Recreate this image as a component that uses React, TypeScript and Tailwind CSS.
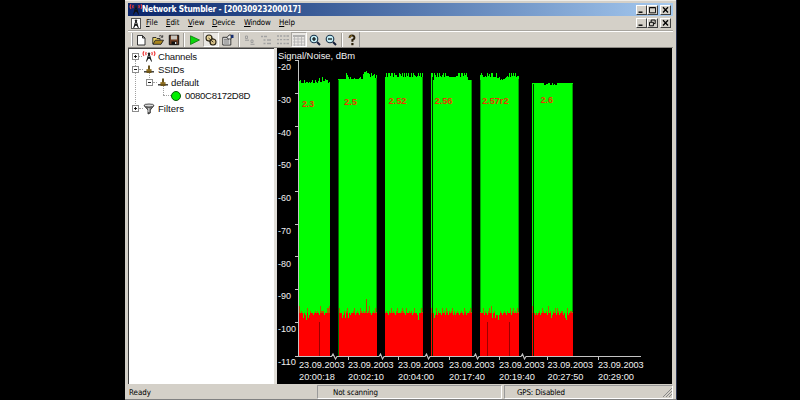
import React from "react";

const ui = "font-['DejaVu_Sans_Condensed','DejaVu_Sans',sans-serif]";
const arial = "font-['Liberation_Sans',Arial,sans-serif]";

type Item = { t: string; w: string; ls: string };

const menus: Item[] = [
  { t: "File", w: "w-[20px]", ls: "tracking-[0.05px]" },
  { t: "Edit", w: "w-[22px]", ls: "tracking-[-0.1px]" },
  { t: "View", w: "w-[24px]", ls: "tracking-[-0.1px]" },
  { t: "Device", w: "w-[32px]", ls: "tracking-[-0.25px]" },
  { t: "Window", w: "w-[35px]", ls: "tracking-[-0.25px]" },
  { t: "Help", w: "w-[20px]", ls: "tracking-[-0.05px]" },
];

function Tower({ red = true }: { red?: boolean }) {
  return (
    <svg viewBox="0 0 14 11" className="block h-[11px] w-[14px] shrink-0">
      <path d="M7 2.5 L4.5 10.5 M7 2.5 L9.5 10.5 M5.8 6 L9 8.5 M8.2 6 L5 8.5" fill="none" stroke="#111" strokeWidth="1" />
      <circle cx="7" cy="2.6" r="1.2" fill="#222" />
      {red && (
        <path d="M4.3 1 Q3.2 2.6 4.3 4.2 M2 .3 Q.2 2.6 2 4.8 M9.7 1 Q10.8 2.6 9.7 4.2 M12 .3 Q13.8 2.6 12 4.8" fill="none" stroke="#ef3b3b" strokeWidth="1.2" />
      )}
    </svg>
  );
}

function WinButton({ kind }: { kind: "min" | "max" | "restore" | "close" }) {
  return (
    <div className="h-[10px] w-[11px] border border-t-white border-l-white border-r-[#404040] border-b-[#404040] bg-[#d4d0c8]">
      <svg viewBox="0 0 9 8" className="block h-[8px] w-[9px]">
        {kind === "min" && <path d="M1.5 6.2 H5.5" stroke="#000" strokeWidth="1.4" />}
        {kind === "max" && <path d="M1.5 1.5 H7.5 V6.8 H1.5 Z M1.5 1.8 H7.5" fill="none" stroke="#000" strokeWidth=".9" />}
        {kind === "restore" && <path d="M3.2 3 V1 H7.2 V4.6 H5.6 M1.5 3.3 H5.4 V6.8 H1.5 Z" fill="none" stroke="#000" strokeWidth=".95" />}
        {kind === "close" && <path d="M2 1.3 L7 6.5 M7 1.3 L2 6.5" stroke="#000" strokeWidth="1.3" />}
      </svg>
    </div>
  );
}

function Separator() {
  return <div className="mx-[2px] h-[14px] w-[2px] border-l border-[#a19e98] border-r border-r-white" />;
}

function Tool({ w, pressed, children }: { w: string; pressed?: boolean; children: React.ReactNode }) {
  return (
    <div className={`flex h-[15px] items-center justify-center ${w} ${pressed ? "border border-t-[#a8a59f] border-l-[#a8a59f] border-r-white border-b-white bg-[#e9e7e3]" : ""}`}>
      <svg viewBox="0 0 12 12" className="block h-[12px] w-[12px] shrink-0">{children}</svg>
    </div>
  );
}

function Magnifier({ plus }: { plus?: boolean }) {
  return (
    <>
      <circle cx="5" cy="5" r="3.8" fill="#c4eef5" stroke="#16324a" strokeWidth="1.1" />
      <path d={plus ? "M3 5 H7 M5 3 V7" : "M3 5 H7"} stroke="#000" strokeWidth="1.2" />
      <path d="M8 8 L11 11" stroke="#16213a" strokeWidth="1.9" />
    </>
  );
}

function Expander({ plus }: { plus?: boolean }) {
  return (
    <svg viewBox="0 0 7 7" className="block h-[7px] w-[7px] shrink-0">
      <rect x=".5" y=".5" width="6" height="6" fill="#fff" stroke="#8c8c8c" />
      <path d={plus ? "M2 3.5 H5 M3.5 2 V5" : "M2 3.5 H5"} stroke="#000" strokeWidth=".9" />
    </svg>
  );
}

function Dots({ w }: { w: string }) {
  return <div className={`h-px shrink-0 border-t border-dotted border-[#a0a0a0] ${w}`} />;
}

function Station() {
  return (
    <svg viewBox="0 0 12 9" className="block h-[9px] w-[12px] shrink-0">
      <path d="M1 6.8 H11" stroke="#333" strokeWidth="1.4" />
      <path d="M3.5 4.2 H8.5 V8 H3.5 Z" fill="#6d5518" />
      <path d="M6 .6 V5" stroke="#5b440c" strokeWidth="1.8" />
      <path d="M3.5 5 H8" stroke="#c79a32" strokeWidth=".8" />
    </svg>
  );
}

function Tree() {
  return (
    <div className={`relative w-[146px] shrink-0 border-l border-t border-[#404040] bg-white pt-[1px] pl-[3px] text-[9.6px] leading-[13px] tracking-[-0.22px] text-[#111] ${arial}`}>
      <div className="absolute top-[11px] left-[6px] h-[46px] border-l border-dotted border-[#a0a0a0]" />
      <div className="absolute top-[24px] left-[20px] h-[5px] border-l border-dotted border-[#a0a0a0]" />
      <div className="absolute top-[37px] left-[34px] h-[9px] border-l border-dotted border-[#a0a0a0]" />
      <div className="relative flex h-[13px] items-center">
        <Expander plus /><Dots w="w-[3px]" /><Tower /><span className="ml-[2px]">Channels</span>
      </div>
      <div className="relative flex h-[13px] items-center">
        <Expander /><Dots w="w-[4px]" /><Station /><span className="ml-[3px]">SSIDs</span>
      </div>
      <div className="relative flex h-[13px] items-center pl-[14px]">
        <Expander /><Dots w="w-[4px]" /><Station /><span className="ml-[2px] tracking-[-0.15px]">default</span>
      </div>
      <div className="relative flex h-[13px] items-center pl-[31px]">
        <Dots w="w-[8px]" />
        <div className="size-[10px] shrink-0 rounded-full border border-[#0a5a0a] bg-[#00f000]" />
        <span className="ml-[4px] tracking-[-0.31px]">0080C8172D8D</span>
      </div>
      <div className="relative flex h-[13px] items-center">
        <Expander plus /><Dots w="w-[4px]" />
        <svg viewBox="0 0 12 12" className="block h-[12px] w-[12px] shrink-0">
          <path d="M1 2.5 L5 7 V11 L7.3 10 V7 L11 2.5 Z" fill="#777" stroke="#222" strokeWidth=".8" />
          <ellipse cx="6" cy="2.5" rx="5" ry="1.5" fill="#ddd" stroke="#222" strokeWidth=".8" />
          <path d="M5.8 5 V9" stroke="#fff" strokeWidth=".8" />
        </svg>
        <span className="ml-[3px] tracking-[0px]">Filters</span>
      </div>
    </div>
  );
}

// Bars in screen pixels: signal tops are one digit per pixel column, offset from `top`.
type Bar = { x: number; top: number; tops: string; noise: string; label: string; lx: number; ly: number; lw: number };

const bars: Bar[] = [
  { x: 299, top: 77, tops: "4366636556565366356415504423365", noise: "2545756837645565454562444655332", label: "2.3", lx: 302, ly: 106.5, lw: 12 },
  { x: 338, top: 70, tops: "999999993579799989999879942213347365485", noise: "335576474375655436545634545415425654534", label: "2.5", lx: 344, ly: 105, lw: 13 },
  { x: 385, top: 71, tops: "62622522624466235262625266262456525262", noise: "54564535456435554345635545465355685533", label: "2.52", lx: 388.5, ly: 104.2, lw: 18 },
  { x: 431, top: 71, tops: "22924626256426255566666665522622524269999", noise: "33576364556354634645436465456545634655434", label: "2.56", lx: 434.5, ly: 104.2, lw: 18 },
  { x: 480, top: 71, tops: "424665625362266627769898876562625252655", noise: "455364564352754766864565456455364354534", label: "2.57r2", lx: 482, ly: 103.8, lw: 26.5 },
  { x: 532, top: 78, tops: "55555555555577665577576775555555555555555", noise: "23565654653455462547645363465446578365444", label: "2.6", lx: 540.5, ly: 103, lw: 12.5 },
];

const dates = [
  { x: 299, t: "20:00:18" },
  { x: 348, t: "20:02:10" },
  { x: 398, t: "20:04:00" },
  { x: 449, t: "20:17:40" },
  { x: 499, t: "20:19:40" },
  { x: 547.5, t: "20:27:50" },
  { x: 598, t: "20:29:00" },
];

function steps(x: number, tops: number[]) {
  return tops.map((y, i) => `M${x + i} ${y}h1V356h-1z`).join("");
}

function Chart() {
  return (
    <svg viewBox="277 48 395 336" shapeRendering="crispEdges" className={`block h-[336px] w-[395px] shrink-0 bg-black ${arial}`}>
      {bars.map((b) => {
        const noise = b.noise.split("").map((c) => 301 + Number(c) * 2.4);
        return (
          <g key={b.label}>
            <path d={steps(b.x, b.tops.split("").map((c) => b.top + Number(c)))} fill="#00ff00" />
            <path d={steps(b.x, noise)} fill="#ff0000" />
            <path d={noise.map((y, i) => (y < 312 ? `M${b.x + i} ${y}h1V313h-1z` : "")).join("")} fill="#b06000" />
            <text x={b.lx} y={b.ly} textLength={b.lw} lengthAdjust="spacingAndGlyphs" fontSize="9.8" fontWeight="700" fill="#e83800">{b.label}</text>
          </g>
        );
      })}
      <path d="M338.5 80V356" stroke="#007000" />
      <path d="M432.5 77V356 M533.5 84V356" stroke="#003000" />
      <path d="M376.5 78V312 M422.5 77V312 M471.5 80V312 M518.5 79V312 M572.5 84V312 M480.5 80V312" stroke="#00a000" />
      <path d="M366.5 299V312" stroke="#c04000" />
      <path d="M319.5 322V356 M487.5 322V356 M509.5 322V356" stroke="#9c0000" />
      <path d="M298.5 61V356" stroke="#c4c4c4" />
      {[60.5, 93.5, 126.5, 159.5, 191.5, 224.5, 256.5, 289.5, 322.5].map((y) => (
        <path key={y} d={`M295 ${y}H299`} stroke="#c4c4c4" />
      ))}
      <path
        d="M295 356.5H331.5L333 354L335.5 359L337 356.5H379L380.5 354L382.5 359L384 356.5H425L426.5 354L428.5 359L430 356.5H474L475.5 354L477.5 359L479 356.5H521L522.5 354L524.5 359L526 356.5H641"
        fill="none" stroke="#c4c4c4" strokeWidth="1.1" shapeRendering="auto"
      />
      {dates.map((d, i) => (
        <g key={d.t} fontSize="9.6" fill="#f0f0f0">
          {i > 0 && <path d={`M${Math.floor(d.x) + 0.5} 357v3`} stroke="#c4c4c4" />}
          <text x={d.x} y="368.4" textLength="45.7" lengthAdjust="spacingAndGlyphs">23.09.2003</text>
          <text x={d.x} y="380.2" textLength="36" lengthAdjust="spacingAndGlyphs">{d.t}</text>
        </g>
      ))}
      <text x="278" y="58.7" fontSize="9.6" fill="#f4f4f4" textLength="77" lengthAdjust="spacingAndGlyphs">Signal/Noise, dBm</text>
      {[20, 30, 40, 50, 60, 70, 80, 90, 100, 110].map((v, i) => (
        <text key={v} x="278" y={70.3 + i * 32.7} fontSize="9.6" fill="#f0f0f0" textLength={v > 99 ? 18 : 13} lengthAdjust="spacingAndGlyphs">{`-${v}`}</text>
      ))}
    </svg>
  );
}

export default function App() {
  return (
    <div className="flex h-[400px] w-[800px] overflow-hidden bg-black pl-[125px]">
      <div className={`flex h-[400px] w-[552px] flex-col border-b border-b-[#808080] border-r border-r-[#2a3350] bg-[#d4d0c8] pr-[3px] pl-[3px] ${ui}`}>
        <div className="-mx-[3px] mb-[2px] h-px shrink-0 bg-[#eeece8]" />
        <div className="flex h-[13px] shrink-0 items-center bg-linear-to-r from-[#0a246a] to-[#a6caf0] pr-[2px] pl-px">
          <Tower />
          <span className="ml-[-1px] flex-1 text-[8.3px] leading-[13px] font-bold tracking-[-0.17px] whitespace-nowrap text-white">Network Stumbler - [20030923200017]</span>
          <WinButton kind="min" /><WinButton kind="max" />
          <div className="ml-[2px]"><WinButton kind="close" /></div>
        </div>
        <div className="flex h-[14px] shrink-0 items-center pr-[2px] pl-[3px] text-[7.9px] leading-[14px] text-black">
          <div className="mr-[5px] flex h-[11px] w-[10px] items-center justify-center overflow-hidden border border-[#555] bg-white"><Tower red={false} /></div>
          {menus.map((m) => (
            <span key={m.t} className={`${m.w} ${m.ls} whitespace-nowrap`}>
              <span className="underline underline-offset-1">{m.t[0]}</span>{m.t.slice(1)}
            </span>
          ))}
          <div className="flex-1" />
          <WinButton kind="min" /><WinButton kind="restore" />
          <div className="ml-[2px]"><WinButton kind="close" /></div>
        </div>
        <div className="h-[2px] shrink-0 border-t border-[#a8a59f] bg-white" />
        <div className="flex h-[15px] shrink-0 items-center">
          <div className="ml-[3px] h-[13px] w-[2px] border-l border-white border-r border-r-[#999]" />
          <Tool w="w-[16px]"><path d="M2.5 1.5 H7.5 L10 4 V11 H2.5 Z M7.5 1.5 V4 H10" fill="#fff" stroke="#222" strokeWidth=".9" /></Tool>
          <Tool w="w-[17px]">
            <path d="M.8 10 V3.5 H4 L5 4.5 H8 V6" fill="#e9d268" stroke="#222" strokeWidth=".9" />
            <path d="M1 10.3 L3.3 6.2 H11.5 L9 10.3 Z" fill="#a8841c" stroke="#222" strokeWidth=".9" />
            <path d="M7 2.2 Q9 .5 10.5 3 M10.7 1.2 V3.2 H8.7" fill="none" stroke="#222" strokeWidth=".8" />
          </Tool>
          <Tool w="w-[15px]">
            <path d="M1.3 1.3 H10.7 V10.7 H1.3 Z" fill="#6a3a20" stroke="#111" />
            <path d="M3 1.5 H9 V5.5 H3 Z" fill="#c9c5bd" /><path d="M3.5 7.5 H8.8 V10.5 H3.5 Z" fill="#111" /><path d="M7 8 H8.3 V10 H7 Z" fill="#ddd" />
          </Tool>
          <Separator />
          <Tool w="w-[16px]"><path d="M1.5 1.8 L10.5 6 L1.5 10.5 Z" fill="#0bd50b" stroke="#087808" strokeWidth=".8" /></Tool>
          <Tool w="w-[16px]" pressed>
            <circle cx="4" cy="4" r="3" fill="#e7d49a" stroke="#2b2516" strokeWidth="1.1" /><circle cx="8" cy="8" r="3" fill="#d6c088" stroke="#2b2516" strokeWidth="1.1" />
            <path d="M3.5 4 L8.3 8.2 M6 3.5 L8.5 5 M3.5 7 L6 8.5" stroke="#2b2516" strokeWidth=".9" />
          </Tool>
          <Tool w="w-[17px]">
            <path d="M.8 3.3 H8.8 V11 H.8 Z" fill="#fff" stroke="#222" strokeWidth=".9" /><path d="M2 5.2 H7 M2 7 H7.5 M2 9 H7.5" stroke="#444" strokeWidth=".9" />
            <path d="M5 3.5 L7 1 H9 V5 H6 Z" fill="#eee" stroke="#222" strokeWidth=".8" /><path d="M9 .8 H11.5 V4 H9 Z" fill="#162e70" />
          </Tool>
          <Separator />
          <Tool w="w-[15px]"><path d="M1.5 2 H3.5 V4.5 H1.5 Z M7 6 H9 V8.5 H7 Z" fill="none" stroke="#999" strokeWidth=".9" /><path d="M1 6.2 H5 M6.5 10.3 H10.5" stroke="#999" /></Tool>
          <Tool w="w-[17px]"><path d="M1 2.5 H3 M4 2.5 H7 M3.5 6 H5.5 M7 6 H11 M3.5 9.5 H5.5 M7 9.5 H11" stroke="#a2a2a2" strokeWidth="1.3" /></Tool>
          <Tool w="w-[17px]"><path d="M0 2 H2 M3 2 H5 M6.5 2 H8.5 M9.5 2 H12 M0 5.7 H2 M3 5.7 H5 M6.5 5.7 H8.5 M9.5 5.7 H12 M0 9.5 H2 M3 9.5 H5 M6.5 9.5 H8.5 M9.5 9.5 H12" stroke="#a2a2a2" strokeWidth="1.3" /></Tool>
          <Tool w="w-[16px]" pressed><path d="M0 2 H12" stroke="#aaa" strokeWidth="1.8" /><path d="M0 5 H12 M0 8 H12 M0 11 H12 M1.5 3 V12 M5 3 V12 M8.5 3 V12 M11.5 3 V12" stroke="#b0b0b0" strokeWidth=".8" /></Tool>
          <Tool w="w-[16px]"><Magnifier plus /></Tool>
          <Tool w="w-[16px]"><Magnifier /></Tool>
          <Separator />
          <Tool w="w-[14px]"><path d="M3.6 4 Q3.4 1.5 6 1.5 Q8.6 1.5 8.4 4 Q8.2 5.2 6.4 6 V7.8" fill="none" stroke="#2a200a" strokeWidth="2" /><path d="M3.6 4 Q3.5 1.8 6 1.6" fill="none" stroke="#b58c28" strokeWidth=".8" /><path d="M5.3 9 H7.5 V11.2 H5.3 Z" fill="#2a200a" /></Tool>
          <div className="h-[15px] w-px bg-[#999]" />
        </div>
        <div className="h-px shrink-0 bg-[#8c8984]" />
        <div className="flex h-[336px] shrink-0">
          <Tree />
          <div className="w-[3px] shrink-0 bg-[#e2dfd9]" />
          <Chart />
        </div>
        <div className="mt-[1px] flex h-[14px] shrink-0 gap-[2px] text-[7.9px] leading-[13px] text-black">
          <div className="w-[187px] pt-[1px] pl-[1px]">Ready</div>
          <div className="w-[185px] border border-t-[#999] border-l-[#999] border-r-white border-b-white pl-[15px] tracking-[-0.15px]">Not scanning</div>
          <div className="flex flex-1 justify-between border border-t-[#999] border-l-[#999] border-r-white border-b-white pl-[12px]">
            <span className="tracking-[-0.15px]">GPS: Disabled</span>
            <svg viewBox="0 0 9 12" className="block h-[12px] w-[9px]"><path d="M0 11 L9 2 M3 11 L9 5 M6 11 L9 8" stroke="#888" /></svg>
          </div>
        </div>
      </div>
    </div>
  );
}
